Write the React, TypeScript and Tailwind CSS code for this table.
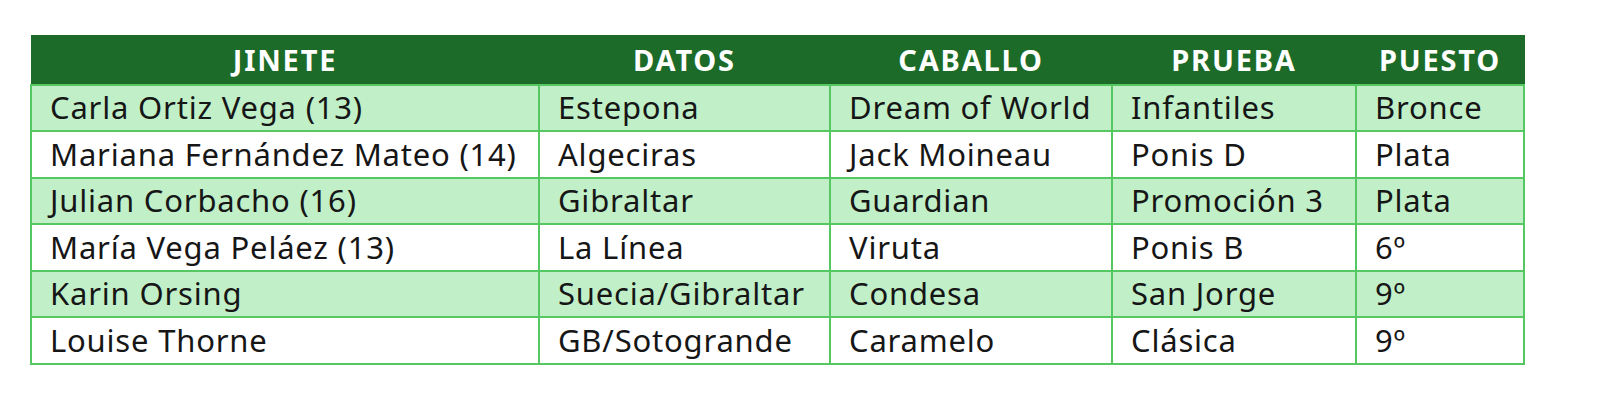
const headers = ['JINETE', 'DATOS', 'CABALLO', 'PRUEBA', 'PUESTO'];

const rows: string[][] = [
  ['Carla Ortiz Vega (13)', 'Estepona', 'Dream of World', 'Infantiles', 'Bronce'],
  ['Mariana Fernández Mateo (14)', 'Algeciras', 'Jack Moineau', 'Ponis D', 'Plata'],
  ['Julian Corbacho (16)', 'Gibraltar', 'Guardian', 'Promoción 3', 'Plata'],
  ['María Vega Peláez (13)', 'La Línea', 'Viruta', 'Ponis B', '6º'],
  ['Karin Orsing', 'Suecia/Gibraltar', 'Condesa', 'San Jorge', '9º'],
  ['Louise Thorne', 'GB/Sotogrande', 'Caramelo', 'Clásica', '9º'],
];

const widths = ['w-[508px]', 'w-[291px]', 'w-[282px]', 'w-[244px]', 'w-[168px]'];

export default function App() {
  return (
    <div className="w-[1600px] h-[413px] bg-white pt-[35px] pl-[30px] font-['Noto_Sans',sans-serif]">
      <table className="table-fixed border-collapse w-[1493px]">
        <colgroup>
          {widths.map((w, i) => (
            <col key={i} className={w} />
          ))}
        </colgroup>
        <thead>
          <tr className="h-[49px] bg-[#1d6b28]">
            {headers.map((h) => (
              <th
                key={h}
                className="text-center text-white font-bold text-[29px] tracking-[1.8px] leading-none border border-[#1d6b28]"
              >
                {h}
              </th>
            ))}
          </tr>
        </thead>
        <tbody>
          {rows.map((r, i) => (
            <tr key={i} className={`h-[46.5px] ${i % 2 === 0 ? 'bg-[#c1f0c8]' : 'bg-white'}`}>
              {r.map((c, j) => (
                <td
                  key={j}
                  className="border-2 border-[#55c862] pl-[18px] text-[31px] tracking-[0.8px] leading-none text-[#161616] whitespace-nowrap"
                >
                  {c}
                </td>
              ))}
            </tr>
          ))}
        </tbody>
      </table>
    </div>
  );
}
